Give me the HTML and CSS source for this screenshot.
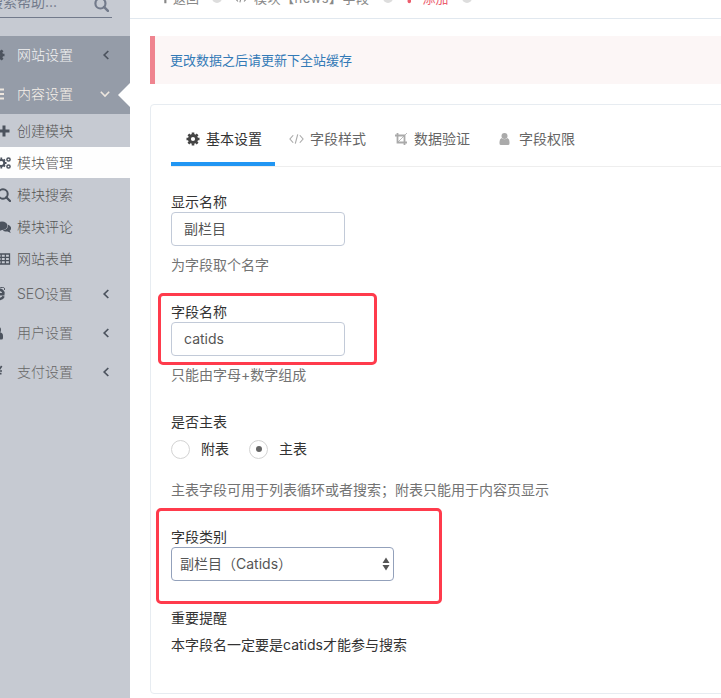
FILE: index.html
```html
<!DOCTYPE html>
<html lang="zh-CN">
<head>
<meta charset="utf-8">
<title>字段添加</title>
<link rel="stylesheet" href="styles.css">
</head>
<body>
<svg class="defs" aria-hidden="true">
  <symbol id="gear" viewBox="0 0 14 14"><circle cx="7" cy="7" r="3.6" fill="none" stroke="currentColor" stroke-width="3"/><path d="M7 .5v2M7 11.500v2M.5 7h2M11.500 7h2M2.400 2.400l1.400 1.400M10.200 10.200l1.400 1.400M2.400 11.600l1.400-1.400M10.200 3.800l1.400-1.400" stroke="currentColor" stroke-width="2.600"/></symbol>
  <symbol id="left" viewBox="0 0 8 10"><path d="M6.300 1L2.200 5l4.100 4" fill="none" stroke="currentColor" stroke-width="1.700"/></symbol>
  <symbol id="down" viewBox="0 0 10 8"><path d="M.8 1.800L5 6l4.200-4.200" fill="none" stroke="currentColor" stroke-width="1.600"/></symbol>
  <symbol id="search" viewBox="0 0 14 14"><circle cx="6" cy="6" r="4.700" fill="none" stroke="currentColor" stroke-width="2"/><path d="M9.300 9.300l3.700 3.700" stroke="currentColor" stroke-width="2.300" stroke-linecap="round"/></symbol>
  <symbol id="code" viewBox="0 0 16 12"><path d="M4.500 2L1 6l3.500 4M11.500 2L15 6l-3.500 4M9.300 1L6.700 11" fill="none" stroke="currentColor" stroke-width="1.200"/></symbol>
</svg>
<div class="app">
  <aside class="sidebar">
    <div class="search"><span>搜索帮助...</span><svg><use href="#search"/></svg></div>
    <nav class="menu">
      <a class="item open"><svg class="ico"><use href="#gear"/></svg><span>网站设置</span><svg class="arrow"><use href="#left"/></svg></a>
      <a class="item open current"><svg class="ico" viewBox="0 0 14 14"><path d="M0 2.500h13M0 7h13M0 11.500h13" stroke="currentColor" stroke-width="1.900"/></svg><span>内容设置</span><svg class="arrow down"><use href="#down"/></svg></a>
      <div class="submenu">
        <a class="sub"><svg class="ico" viewBox="0 0 14 14"><path d="M7 1.500v11M1.500 7h11" stroke="currentColor" stroke-width="3"/></svg><span>创建模块</span></a>
        <a class="sub active"><svg class="ico" viewBox="0 0 14 14"><g fill="none" stroke="currentColor"><circle cx="4.300" cy="7" r="3" stroke-width="2"/><path d="M4.300 1.500v2M4.300 10.500v2M-1 7h2M7.500 7h2M1 3.500l1 1M7 9.500l1 1M7 4.500l1-1" stroke-width="1.800"/><circle cx="11.500" cy="3.500" r="1.600" stroke-width="1.500"/><circle cx="11.500" cy="10.500" r="1.600" stroke-width="1.500"/></g></svg><span>模块管理</span></a>
        <a class="sub"><svg class="ico"><use href="#search"/></svg><span>模块搜索</span></a>
        <a class="sub"><svg class="ico" viewBox="0 0 14 14"><ellipse cx="5" cy="5.800" rx="5.500" ry="4.200"/><path d="M1 8l-1 4 5-2zM11 4.800c3.500 1.200 4 4.200 1.700 5.900l1.100 2.300-3.200-1.500c-2 .3-3.700-.1-4.800-1 3.700-.6 5.600-2.800 5.200-5.700z"/></svg><span>模块评论</span></a>
        <a class="sub"><svg class="ico" viewBox="0 0 14 14"><path d="M0 2h12.500v10H0zM0 5.300h12.500M0 8.600h12.500M4.200 2v10M8.400 2v10" fill="none" stroke="currentColor" stroke-width="1.300"/></svg><span>网站表单</span></a>
      </div>
      <a class="item"><svg class="ico" viewBox="0 0 14 14"><path d="M3 7.200h10.500M12.700 9.200c-1.300 3-5.700 4.200-8.700 1.500M4 4.500c2.500-3 8-2.500 8.700 2.200" fill="none" stroke="currentColor" stroke-width="2.400"/><path d="M8 1.200c3-1.500 6.500-1 5.500 1.800" fill="none" stroke="currentColor"/></svg><span>SEO设置</span><svg class="arrow"><use href="#left"/></svg></a>
      <a class="item"><svg class="ico" viewBox="0 0 14 14"><circle cx="6.700" cy="4" r="3.300"/><path d="M0 13v-3q0-4 6-4t6 4v2q0 1.500-1.500 1.500H0z"/></svg><span>用户设置</span><svg class="arrow"><use href="#left"/></svg></a>
      <a class="item"><svg class="ico" viewBox="0 0 14 14"><path d="M3 6h8M3 8.700h7.500M10.700 1L7 6.500V13" fill="none" stroke="currentColor" stroke-width="1.700"/></svg><span>支付设置</span><svg class="arrow"><use href="#left"/></svg></a>
    </nav>
  </aside>
  <main class="main">
    <header class="crumbs">
      <span class="crumb back"><svg viewBox="0 0 14 14"><path d="M5 1h2.500v12H5zM1 4l4-3v3z"/></svg>返回<i class="dot"></i></span>
      <span class="crumb module"><svg><use href="#code"/></svg><span class="name">模块【news】字段</span><i class="dot"></i></span>
      <span class="crumb add"><svg viewBox="0 0 14 14"><path d="M3 1h4v10q0 2-2 2t-2-2z"/></svg>添加<i class="dot"></i></span>
    </header>
    <div class="notice">更改数据之后请更新下全站缓存</div>
    <section class="card">
      <nav class="tabs">
        <a class="tab selected"><svg><use href="#gear"/></svg>基本设置</a>
        <a class="tab"><svg class="wide"><use href="#code"/></svg>字段样式</a>
        <a class="tab crop"><svg viewBox="0 0 14 14"><path d="M3.500 1v9.500H13M1 3.500h9.500V13" fill="none" stroke="currentColor" stroke-width="1.800"/><path d="M4 10L13 1" stroke="currentColor" stroke-width=".8"/></svg>数据验证</a>
        <a class="tab user"><svg viewBox="0 0 12 14"><circle cx="6" cy="4" r="3"/><path d="M3 6q3 2.500 6 0 2 1 2 4v1.500q0 1.500-1.500 1.500h-7Q1 13 1 11.500V10q0-3 2-4z"/></svg>字段权限</a>
      </nav>
      <form class="form">
        <div class="group"><label>显示名称</label><div class="input">副栏目</div><p class="help">为字段取个名字</p></div>
        <div class="group"><label>字段名称</label><div class="input">catids</div><p class="help">只能由字母+数字组成</p><i class="mark mark-name"></i></div>
        <div class="group"><label>是否主表</label><div class="radios"><span class="radio"></span><span>附表</span><span class="radio checked"></span><span>主表</span></div><p class="help after-radios">主表字段可用于列表循环或者搜索；附表只能用于内容页显示</p></div>
        <div class="group"><label>字段类别</label><div class="input select"><span>副栏目（Catids）</span><svg viewBox="0 0 8 14"><path d="M4 .5l3.500 5.500h-7zM4 13.500L7.500 8h-7z"/></svg></div><i class="mark mark-type"></i></div>
        <div class="group"><label>重要提醒</label><div class="static">本字段名一定要是catids才能参与搜索</div></div>
      </form>
    </section>
  </main>
</div>
</body>
</html>
```
FILE: styles.css
```css
* { box-sizing: border-box; }
body {
  margin: 0;
  height: 698px;
  overflow: hidden;
  background: #fff;
  color: #333;
  font: 14px/20px Inter, "Noto Sans CJK SC", sans-serif;
}
svg { fill: currentColor; flex: none; }
.defs { display: none; }
.app { display: flex; height: 698px; }

.sidebar {
  width: 130px;
  flex: none;
  overflow: hidden;
  background: #c6cad2;
  color: #666;
  font-weight: 300;
}
.search {
  display: flex;
  justify-content: space-between;
  align-items: center;
  height: 32px;
  margin: -14px 18px 18px -11px;
  padding: 6px 3px 0 0;
  border-bottom: 1px solid #727a8b;
  color: #727a8b;
  font-weight: 400;
  white-space: nowrap;
}
.search span { margin-top: -6px; }
.search svg { width: 15px; height: 15px; }
.item, .sub { display: flex; align-items: center; }
.item { height: 39px; padding: 0 20px 1px 0; }
.item span, .sub span { flex: 1; }
.ico { width: 14px; height: 14px; color: #4c535e; }
.item .ico { margin: 0 12px 0 -9px; }
.arrow { width: 8px; height: 10px; color: #4c535e; }
.arrow.down { width: 10px; height: 8px; }
.open { background: #959ca8; color: #f3f3f3; }
.current { position: relative; color: #f5f0e8; }
.current .ico, .arrow.down { color: #eee7df; }
.current::after {
  content: "";
  position: absolute;
  right: 0;
  top: 8px;
  border: solid transparent;
  border-width: 12px 12px 12px 0;
  border-right-color: #fff;
}
.submenu { padding-top: 1px; }
.sub { height: 32px; color: #555; }
.sub .ico { margin: 0 9px 0 -3px; }
.sub span { margin-left: -3px; }
.active { height: 31px; margin-bottom: 1px; background: #fefefe; }

.main { flex: 1; min-width: 0; overflow: hidden; }
.crumbs {
  display: flex;
  height: 33px;
  margin-top: -14px;
  padding-left: 30px;
  border-bottom: 1px solid #e1e8ef;
  color: #888;
  font-size: 13px;
  white-space: nowrap;
}
.crumb { display: flex; align-items: center; height: 23px; }
.crumb svg { width: 12px; height: 12px; margin-right: 1px; }
.module { margin-left: 12px; }
.module svg { width: 14px; margin: 0 6px 0 0; }
.name { letter-spacing: .5px; }
.add { margin-left: 12px; color: #ec5d6d; }
.add svg { margin-right: 6px; }
.dot { width: 10px; height: 10px; margin-left: 13px; border-radius: 50%; background: #ddd; }
.notice {
  height: 48px;
  margin: 17px 0 20px 20px;
  padding: 14px 15px;
  border-left: 5px solid #ef848f;
  background: #fcf6f6;
  color: #337ab7;
  font-size: 13px;
}
.card {
  height: 590px;
  margin: 0 -10px 0 20px;
  padding: 20px 0 20px 20px;
  border: 1px solid #e7ecf1;
  border-radius: 4px;
}
.tabs {
  display: flex;
  height: 42px;
  border-bottom: 1px solid #eee;
}
.tab {
  display: flex;
  align-items: center;
  height: 41px;
  padding: 0 14px 13px;
  color: #666;
}
.tab svg { width: 14px; height: 14px; margin-right: 6px; color: #aaa; }
.tab .wide { width: 15px; height: 12px; }
.user svg { width: 13px; margin-right: 8px; }
.selected {
  width: 104px;
  padding: 0 0 9px 15px;
  border-bottom: 4px solid #2196f3;
  color: #333;
}
.selected svg { color: #444; }

.form { padding-top: 25px; }
.group { position: relative; margin-bottom: 27px; }
label { display: block; height: 20px; }
.input {
  width: 174px;
  height: 34px;
  padding: 6px 12px;
  border: 1px solid #c2cad8;
  border-radius: 4px;
  color: #555;
}
.help { margin: 9px 0 0; color: #737373; }
.help.after-radios { margin-top: 14px; }
.radios { display: flex; align-items: center; height: 34px; }
.radio {
  display: grid;
  place-items: center;
  width: 19px;
  height: 19px;
  margin-right: 11px;
  border: 1px solid #d3d3d3;
  border-radius: 50%;
}
.checked { margin-left: 20px; }
.checked::after { content: ""; width: 6px; height: 6px; border-radius: 50%; background: #666; }
.select {
  display: flex;
  align-items: center;
  justify-content: space-between;
  width: 223px;
  padding: 0 3px 0 8px;
  border-color: #93a1bb;
}
.select svg { width: 8px; height: 14px; }
.static { line-height: 34px; }
.mark { position: absolute; border: 3px solid #ff3b4c; border-radius: 5px; }
.mark-name { left: -13px; top: -9px; width: 219px; height: 72px; }
.mark-type { left: -15px; top: -19px; width: 286px; height: 96px; }
```
